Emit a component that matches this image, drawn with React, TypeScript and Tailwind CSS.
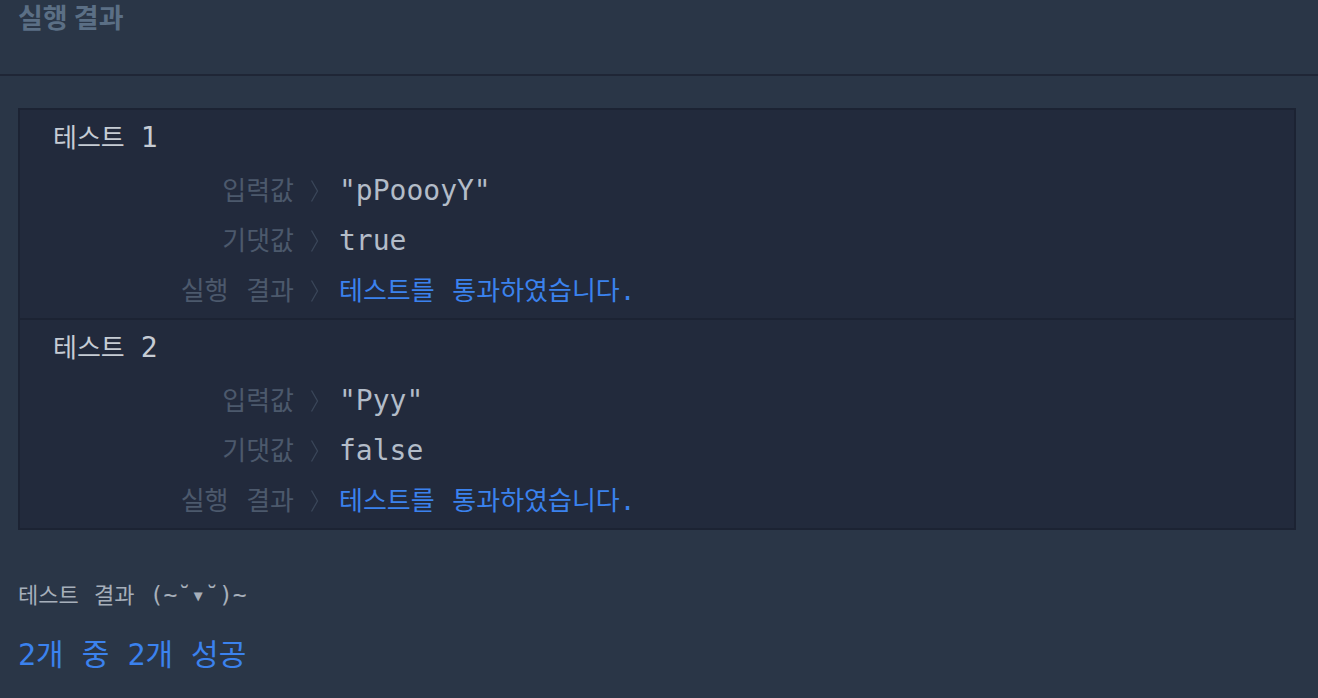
import React from 'react';

const mono = "font-['DejaVu_Sans_Mono','Noto_Sans_CJK_KR',monospace]";

const Chevron = () => (
  <svg width="9" height="24" viewBox="0 0 9 24" className="ml-[16px] shrink-0">
    <polyline points="1.5,1.5 7.5,12 1.5,22.5" fill="none" stroke="#3a4659" strokeWidth="1.3" />
  </svg>
);

const Row = ({ label, children }: { label: string; children: React.ReactNode }) => (
  <div className="flex h-[50px] items-center">
    <div className={`w-[274px] text-right text-[26px] leading-none text-[#4c596c] [word-spacing:2px] ${mono}`}>{label}</div>
    <Chevron />
    <div className="ml-[20px] leading-none">{children}</div>
  </div>
);

const Value = ({ text }: { text: string }) => (
  <span className={`text-[28px] text-[#b3bcc8] ${mono}`}>{text}</span>
);

const Passed = () => (
  <span className={`text-[26px] text-[#3b82ee] [word-spacing:2px] ${mono}`}>테스트를 통과하였습니다.</span>
);

const TestBlock = ({ n, input, expected }: { n: number; input: string; expected: string }) => (
  <div className="pt-[13px] pb-[2px]">
    {/* test title */}
    <div className={`flex h-[30px] items-center pl-[33px] text-[26px] leading-none text-[#c6ccd4] ${mono}`}>
      <span>테스트</span>
      <span className="ml-[16px] text-[28px]">{n}</span>
    </div>
    <div className="mt-[13px]">
      <Row label="입력값"><Value text={input} /></Row>
      <Row label="기댓값"><Value text={expected} /></Row>
      <Row label="실행 결과"><Passed /></Row>
    </div>
  </div>
);

export default function App() {
  return (
    <div className="min-h-screen w-full bg-[#2a3647]">
      {/* Header */}
      <div className="h-[76px] border-b-2 border-[#1f2636] pt-[2px]">
        <h2 className="pl-[18px] text-[27px] leading-[30px] font-bold text-[#5b6f85] font-['Noto_Sans_CJK_KR',sans-serif]">
          실행 결과
        </h2>
      </div>

      <div className="pl-[18px] pr-[22px] pt-[32px]">
        {/* Results box */}
        <div className="border-2 border-[#1c2333] bg-[#222a3c]">
          <TestBlock n={1} input={'"pPoooyY"'} expected="true" />
          <div className="h-[2px] bg-[#1c2333]" />
          <TestBlock n={2} input={'"Pyy"'} expected="false" />
        </div>

        {/* Summary */}
        <div className={`mt-[51px] text-[22px] leading-[28px] text-[#a6afba] [word-spacing:2px] ${mono}`}>
          테스트 결과 <span className="text-[23px]">(~˘▾˘)~</span>
        </div>
        <div className={`mt-[25px] text-[30px] leading-[40px] text-[#3b82ee] ${mono}`}>
          2개 중 2개 성공
        </div>
      </div>
    </div>
  );
}
